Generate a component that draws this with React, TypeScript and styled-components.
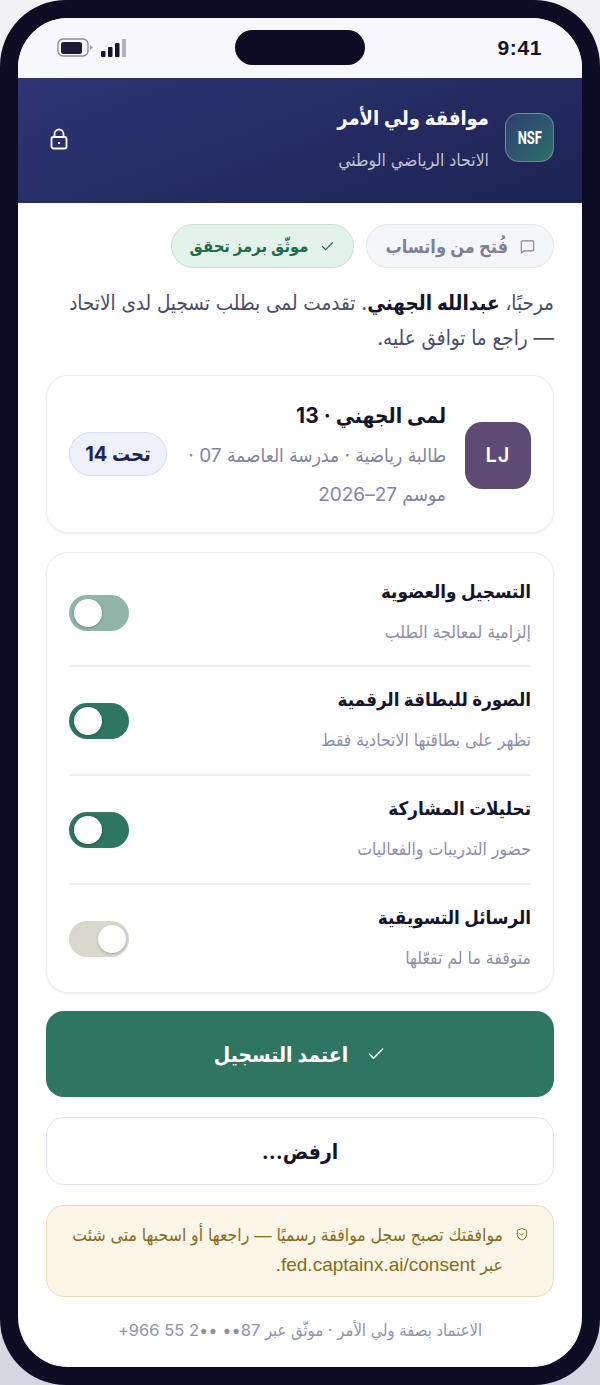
import React from "react";
import styled, { createGlobalStyle } from "styled-components";
import { Check, MessageSquare, ShieldCheck } from "lucide-react";

const GlobalStyle = createGlobalStyle`
  html, body {
    margin: 0;
    padding: 0;
    background: linear-gradient(180deg, #f2f2f6, #d6d6e3);
  }
  * {
    box-sizing: border-box;
  }
`;

const fontStack = `"Inter", "DejaVu Sans Condensed", "DejaVu Sans", sans-serif`;

const Frame = styled.div`
  width: 600px;
  height: 1385px;
  background: #0d0c24;
  border-radius: 66px;
  padding: 18px;
  font-family: ${fontStack};
  font-stretch: condensed;
  overflow: hidden;
`;

const Screen = styled.div`
  height: 1349px;
  background: #fff;
  border-radius: 50px;
  overflow: hidden;
  display: flex;
  flex-direction: column;
`;

const StatusBar = styled.div`
  height: 60px;
  flex: none;
  background: #f8f8fc;
  display: flex;
  align-items: center;
  justify-content: space-between;
  padding: 0 40px 0 39px;
  position: relative;
`;

const StatusIcons = styled.div`
  display: flex;
  align-items: center;
  gap: 8px;
`;

const Island = styled.div`
  position: absolute;
  left: 217px;
  top: 12px;
  width: 130px;
  height: 35px;
  border-radius: 18px;
  background: #0d0c24;
`;

const Clock = styled.span`
  font: 700 21px "Liberation Sans", sans-serif;
  letter-spacing: 0.6px;
  color: #14142a;
`;

const Header = styled.header`
  flex: none;
  height: 125px;
  background: linear-gradient(160deg, #2f3575, #1d2352);
  display: flex;
  align-items: center;
  justify-content: space-between;
  direction: rtl;
  padding: 0 28px 6px 32px;
  color: #fff;
`;

const HeaderLeft = styled.div`
  display: flex;
  align-items: center;
  gap: 16px;
`;

const Crest = styled.div`
  width: 49px;
  height: 49px;
  border-radius: 14px;
  border: 1.5px solid rgba(255, 255, 255, 0.3);
  background: linear-gradient(135deg, #2a3f70, #2f6f6c);
  display: flex;
  align-items: center;
  justify-content: center;
`;

const CrestText = styled.span`
  font: 700 18px "Roboto", sans-serif;
  transform: scaleX(0.72);
`;

const HeaderTitle = styled.div`
  font-size: 20px;
  font-weight: 700;
  line-height: 30px;
`;

const HeaderSub = styled.div`
  font-size: 17.5px;
  line-height: 24px;
  margin-top: 15px;
  color: rgba(255, 255, 255, 0.72);
`;

const LockIcon = styled.svg`
  width: 18px;
  height: 22px;
  margin-top: 3px;
  flex: none;
`;

const Body = styled.main`
  direction: rtl;
  padding: 21px 28px 0;
  display: flex;
  flex-direction: column;
`;

const Chips = styled.div`
  display: flex;
  gap: 12px;
`;

const Chip = styled.div<{ $green?: boolean }>`
  height: 44px;
  border-radius: 22px;
  padding: 0 18px;
  display: flex;
  align-items: center;
  gap: 12px;
  font-size: ${(p) => (p.$green ? "16.5px" : "18px")};
  font-weight: 700;
  color: ${(p) => (p.$green ? "#1f6a4c" : "#7d8098")};
  background: ${(p) => (p.$green ? "#e4f3ea" : "#f5f6fa")};
  border: 1.5px solid ${(p) => (p.$green ? "#c3e2d0" : "#e3e5ef")};
`;

const Intro = styled.p`
  margin: 17px 0 0;
  font-size: 20.5px;
  line-height: 35px;
  color: #4a4d68;
  strong {
    color: #14142a;
  }
`;

const Card = styled.section`
  background: #fff;
  border: 1px solid #eceef3;
  border-radius: 22px;
  box-shadow: 0 1px 3px rgba(20, 20, 50, 0.08);
`;

const PlayerCard = styled(Card)`
  margin-top: 20px;
  height: 158px;
  padding: 0 22px;
  display: flex;
  align-items: center;
  gap: 19px;
`;

const Avatar = styled.div`
  width: 66px;
  height: 67px;
  margin-top: 2px;
  flex: none;
  border-radius: 17px;
  background: #5d4a75;
  color: #fff;
  display: flex;
  align-items: center;
  justify-content: center;
  font: 600 20px "Inter", sans-serif;
  letter-spacing: 1px;
`;

const PlayerInfo = styled.div`
  flex: 1;
  padding-top: 6px;
`;

const PlayerName = styled.div`
  font-size: 21px;
  font-weight: 700;
  line-height: 30px;
  color: #14142a;
`;

const PlayerMeta = styled.div`
  font-size: 19px;
  line-height: 39px;
  margin-top: 5px;
  color: #82859c;
`;

const AgeBadge = styled.div`
  flex: none;
  width: 98px;
  height: 44px;
  border-radius: 22px;
  background: #eef0fa;
  border: 1.5px solid #d9dcef;
  color: #1f2552;
  display: flex;
  align-items: center;
  justify-content: center;
  font-size: 20px;
  font-weight: 700;
`;

const ConsentCard = styled(Card)`
  margin-top: 19px;
  padding: 3px 22px 0;
`;

const ConsentRow = styled.div`
  height: 109px;
  display: flex;
  align-items: center;
  justify-content: space-between;
  & + & {
    border-top: 2px solid #eef0f5;
    padding-bottom: 4px;
  }
`;

const ConsentTitle = styled.div`
  font-size: 18.7px;
  font-weight: 700;
  line-height: 28px;
  color: #14142a;
`;

const ConsentHint = styled.div`
  margin-top: 15px;
  font-size: 17.5px;
  line-height: 22px;
  color: #8e90a6;
`;

const Toggle = styled.div<{ $on: boolean; $locked?: boolean }>`
  width: 60px;
  height: 36px;
  margin-top: 4px;
  border-radius: 18px;
  padding: 4px 3px 4px 5px;
  flex: none;
  display: flex;
  justify-content: ${(p) => (p.$on ? "flex-end" : "flex-start")};
  background: ${(p) =>
    p.$locked ? "#91b6a9" : p.$on ? "#2e7562" : "#d8d8cc"};
`;

const Knob = styled.div`
  width: 28px;
  height: 28px;
  border-radius: 50%;
  background: #fff;
  box-shadow: 0 1px 3px rgba(0, 0, 0, 0.25);
`;

const ApproveButton = styled.button`
  margin-top: 18px;
  height: 86px;
  border: 0;
  border-radius: 18px;
  background: #2e7562;
  color: #fff;
  display: flex;
  align-items: center;
  justify-content: center;
  gap: 18px;
  font: 700 21px ${fontStack};
  font-stretch: condensed;
`;

const RejectButton = styled.button`
  margin-top: 20px;
  height: 68px;
  border: 1.5px solid #e4e5f1;
  border-radius: 18px;
  background: #fff;
  color: #14142a;
  font: 700 21px ${fontStack};
  font-stretch: condensed;
`;

const Notice = styled.div`
  margin-top: 20px;
  height: 92px;
  border-radius: 18px;
  border: 1.5px solid #ecdcae;
  background: #fbf6e8;
  color: #8a6a1c;
  padding: 15px 24px 0 17px;
  display: flex;
  gap: 12px;
  font-family: "Liberation Sans", "DejaVu Sans Condensed", "DejaVu Sans", sans-serif;
  font-size: 17.5px;
  line-height: 29px;
  white-space: nowrap;
`;

const NoticeIcon = styled(ShieldCheck)`
  flex: none;
  margin-top: 6px;
`;

const NoticeLink = styled.span`
  font-size: 19px;
`;

const Footer = styled.div`
  margin-top: 21px;
  text-align: center;
  font-size: 16.5px;
  line-height: 24px;
  color: #9092a8;
`;

const consents = [
  { title: "التسجيل والعضوية", hint: "إلزامية لمعالجة الطلب", on: true, locked: true },
  { title: "الصورة للبطاقة الرقمية", hint: "تظهر على بطاقتها الاتحادية فقط", on: true },
  { title: "تحليلات المشاركة", hint: "حضور التدريبات والفعاليات", on: true },
  { title: "الرسائل التسويقية", hint: "متوقفة ما لم تفعّلها", on: false },
];

function StatusGlyphs() {
  return (
    <StatusIcons>
      <svg width="36" height="20" viewBox="0 0 36 20">
        <rect x="1" y="1" width="30" height="17" rx="5" fill="none" stroke="#8b8b99" strokeWidth="1.4" />
        <rect x="4" y="4" width="21" height="12" rx="2.5" fill="#1b1b36" />
        <path d="M33 7l3 2.5-3 2.5z" fill="#9a9aa6" />
      </svg>
      <svg width="25" height="18" viewBox="0 0 25 18">
        <rect x="0" y="12" width="4.5" height="6" rx="1" fill="#14142a" />
        <rect x="7" y="8" width="4.5" height="10" rx="1" fill="#14142a" />
        <rect x="14" y="4" width="4.5" height="14" rx="1" fill="#14142a" />
        <rect x="21" y="0" width="4" height="18" rx="0.5" fill="#b5b5bf" />
      </svg>
    </StatusIcons>
  );
}

export default function App() {
  return (
    <Frame>
      <GlobalStyle />
      <Screen>
        <StatusBar>
          <StatusGlyphs />
          <Island />
          <Clock>9:41</Clock>
        </StatusBar>
        <Header>
          <HeaderLeft>
            <Crest>
              <CrestText>NSF</CrestText>
            </Crest>
            <div>
              <HeaderTitle>موافقة ولي الأمر</HeaderTitle>
              <HeaderSub>الاتحاد الرياضي الوطني</HeaderSub>
            </div>
          </HeaderLeft>
          <LockIcon viewBox="0 0 18 22" fill="none" stroke="#fff" strokeWidth="1.8">
            <rect x="1.5" y="9" width="15" height="11.5" rx="2" />
            <path d="M4.5 9V6a4.5 4.5 0 0 1 9 0v3" />
            <path d="M9 14v2" />
          </LockIcon>
        </Header>
        <Body>
          <Chips>
            <Chip>
              <MessageSquare size={15} strokeWidth={1.8} />
              فُتح من واتساب
            </Chip>
            <Chip $green>
              <Check size={15} strokeWidth={1.8} />
              موثّق برمز تحقق
            </Chip>
          </Chips>
          <Intro>
            مرحبًا، <strong>عبدالله الجهني</strong>. تقدمت لمى بطلب تسجيل لدى الاتحاد
            <br />— راجع ما توافق عليه.
          </Intro>
          <PlayerCard>
            <Avatar>LJ</Avatar>
            <PlayerInfo>
              <PlayerName>لمى الجهني · 13</PlayerName>
              <PlayerMeta>طالبة رياضية · مدرسة العاصمة 07 · موسم 27–2026</PlayerMeta>
            </PlayerInfo>
            <AgeBadge>تحت 14</AgeBadge>
          </PlayerCard>
          <ConsentCard>
            {consents.map((item) => (
              <ConsentRow key={item.title}>
                <div>
                  <ConsentTitle>{item.title}</ConsentTitle>
                  <ConsentHint>{item.hint}</ConsentHint>
                </div>
                <Toggle $on={item.on} $locked={item.locked}>
                  <Knob />
                </Toggle>
              </ConsentRow>
            ))}
          </ConsentCard>
          <ApproveButton>
            <Check size={20} strokeWidth={1.8} />
            اعتمد التسجيل
          </ApproveButton>
          <RejectButton>ارفض...</RejectButton>
          <Notice>
            <NoticeIcon size={14} strokeWidth={1.6} />
            <span>
              موافقتك تصبح سجل موافقة رسميًا — راجعها أو اسحبها متى شئت
              <br />
              عبر <NoticeLink>fed.captainx.ai/consent.</NoticeLink>
            </span>
          </Notice>
          <Footer>الاعتماد بصفة ولي الأمر · موثّق عبر 87•• ••2 55 966+</Footer>
        </Body>
      </Screen>
    </Frame>
  );
}
